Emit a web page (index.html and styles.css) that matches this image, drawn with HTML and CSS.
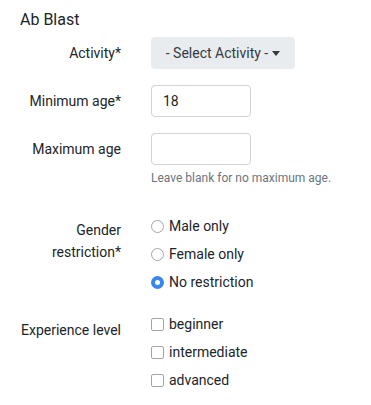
FILE: index.html
```html
<!DOCTYPE html>
<html lang="en">

<head>
    <meta charset="UTF-8">
    <meta name="viewport" content="width=device-width, initial-scale=1.0">
    <title>Ab Blast</title>
    <link rel="stylesheet" href="styles.css">
</head>

<body>
    <div class="panel">
        <h3 class="title">Ab Blast</h3>
        <form class="form">
            <div class="row">
                <label class="label">Activity*</label>
                <div class="field">
                    <button type="button" class="select-btn">- Select Activity - <span class="caret"></span></button>
                </div>
            </div>
            <div class="row">
                <label class="label">Minimum age*</label>
                <div class="field">
                    <input type="text" class="input" value="18">
                </div>
            </div>
            <div class="row">
                <label class="label">Maximum age</label>
                <div class="field">
                    <input type="text" class="input" value="">
                    <div class="help">Leave blank for no maximum age.</div>
                </div>
            </div>
            <div class="row row-options">
                <label class="label label-multi">Gender<br>restriction*</label>
                <div class="field">
                    <label class="option"><input type="radio" name="gender"> Male only</label>
                    <label class="option"><input type="radio" name="gender"> Female only</label>
                    <label class="option"><input type="radio" name="gender" checked> No restriction</label>
                </div>
            </div>
            <div class="row row-options row-exp">
                <label class="label label-exp">Experience level</label>
                <div class="field">
                    <label class="option"><input type="checkbox"> beginner</label>
                    <label class="option"><input type="checkbox"> intermediate</label>
                    <label class="option"><input type="checkbox"> advanced</label>
                </div>
            </div>
        </form>
    </div>
</body>

</html>
```

FILE: styles.css
```css
body {
    margin: 0;
    background: #fff;
    font-family: Roboto, "Liberation Sans", sans-serif;
    font-size: 14px;
    color: #212529;
}
.panel {
    padding: 10px 0 0 0;
}
.title {
    margin: 0 0 8px 20px;
    font-size: 16px;
    font-weight: 400;
    line-height: 19px;
}
.row {
    display: grid;
    grid-template-columns: 121px 1fr;
    column-gap: 30px;
    margin-bottom: 16px;
}
.label {
    text-align: right;
    line-height: 32px;
}
.field {
    display: flex;
    flex-direction: column;
    align-items: flex-start;
}
.select-btn {
    height: 32px;
    width: 144px;
    border: none;
    border-radius: 4px;
    background: #e9ecef;
    color: #343a40;
    font-family: inherit;
    font-size: 14px;
    padding: 0;
    display: flex;
    align-items: center;
    justify-content: center;
    gap: 4px;
}
.caret {
    width: 0;
    height: 0;
    border-left: 4px solid transparent;
    border-right: 4px solid transparent;
    border-top: 5px solid #343a40;
}
.input {
    box-sizing: border-box;
    width: 100px;
    height: 32px;
    border: 1px solid #ced4da;
    border-radius: 4px;
    padding: 0 11px;
    font-family: inherit;
    font-size: 14px;
    color: #212529;
}
.help {
    margin-top: 5px;
    font-size: 12px;
    line-height: 16px;
    color: #6c757d;
}
.row-options {
    margin-top: 30px;
    margin-bottom: 0;
}
.label-multi {
    line-height: 22px;
    padding-top: 3px;
}
.label-exp {
    line-height: 22px;
    padding-top: 5px;
}
.row-exp {
    margin-top: 14px;
}
.option {
    display: flex;
    align-items: center;
    gap: 5px;
    line-height: 20px;
    margin-bottom: 8px;
}
.option input {
    appearance: none;
    -webkit-appearance: none;
    margin: 0;
    width: 13px;
    height: 13px;
    border: 1px solid #a0a6ad;
    background: #fff;
    box-sizing: border-box;
}
.option input[type="radio"] {
    border-radius: 50%;
}
.option input[type="checkbox"] {
    border-radius: 2px;
}
.option input[type="radio"]:checked {
    border: 4px solid #3a86f0;
    background: #fff;
}
```
